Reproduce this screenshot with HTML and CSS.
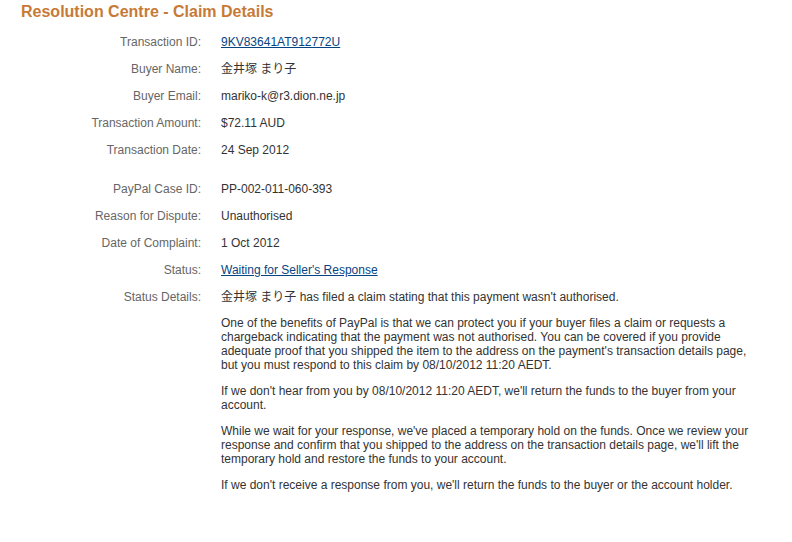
FILE: index.html
```html
<!DOCTYPE html>
<html lang="en">
<head>
    <meta charset="UTF-8">
    <title>Resolution Centre - Claim Details</title>
    <link rel="stylesheet" href="styles.css">
</head>
<body>
    <section class="page">
        <h1 class="title">Resolution Centre - Claim Details</h1>

        <section class="details">
            <div class="label">Transaction ID:</div>
            <div class="value"><a href="#">9KV83641AT912772U</a></div>

            <div class="label">Buyer Name:</div>
            <div class="value">金井塚 まり子</div>

            <div class="label">Buyer Email:</div>
            <div class="value">mariko-k@r3.dion.ne.jp</div>

            <div class="label">Transaction Amount:</div>
            <div class="value">$72.11 AUD</div>

            <div class="label">Transaction Date:</div>
            <div class="value">24 Sep 2012</div>
        </section>

        <section class="details second">
            <div class="label">PayPal Case ID:</div>
            <div class="value">PP-002-011-060-393</div>

            <div class="label">Reason for Dispute:</div>
            <div class="value">Unauthorised</div>

            <div class="label">Date of Complaint:</div>
            <div class="value">1 Oct 2012</div>

            <div class="label">Status:</div>
            <div class="value"><a href="#">Waiting for Seller's Response</a></div>

            <div class="label">Status Details:</div>
            <div class="value text">
                <p>金井塚 まり子 has filed a claim stating that this payment wasn't authorised.</p>
                <p>One of the benefits of PayPal is that we can protect you if your buyer files a claim or requests a chargeback indicating that the payment was not authorised. You can be covered if you provide adequate proof that you shipped the item to the address on the payment's transaction details page, but you must respond to this claim by 08/10/2012 11:20 AEDT.</p>
                <p>If we don't hear from you by 08/10/2012 11:20 AEDT, we'll return the funds to the buyer from your account.</p>
                <p>While we wait for your response, we've placed a temporary hold on the funds. Once we review your response and confirm that you shipped to the address on the transaction details page, we'll lift the temporary hold and restore the funds to your account.</p>
                <p>If we don't receive a response from you, we'll return the funds to the buyer or the account holder.</p>
            </div>
        </section>
    </section>
</body>
</html>
```

FILE: styles.css
```css
*{margin: 0;padding: 0;}
body{
    background: #fff;
    font-family: "Liberation Sans", Arial, "Noto Sans CJK JP", sans-serif;
    font-size: 12px; color: #333;}
.page{padding: 3px 0 0 21px;}
.title{
    font-size: 16px; font-weight: bold; line-height: 18px;
    color: #c77a37;}
.details{
    display: grid; grid-template-columns: 180px 535px;
    column-gap: 20px; row-gap: 13px;
    margin-top: 14px; line-height: 14px;}
.second{margin-top: 25px;}
.label{text-align: right; color: #666;}
.value{color: #333;}
.value a{color: #084482; text-decoration: underline;}
.text p{margin-bottom: 12px;}
.text p:last-child{margin-bottom: 0;}
```
